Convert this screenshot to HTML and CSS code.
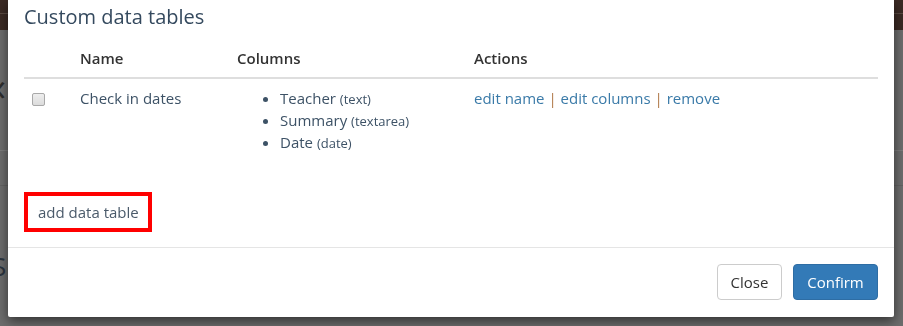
FILE: index.html
```html
<!DOCTYPE html>
<html>
<head>
    <title>Custom data tables</title>
    <link rel="stylesheet" href="styles.css">
</head>
<body>
    <div class="page">
        <div class="topbar"><div class="topbar-line"></div></div>
        <div class="page-back">&lsaquo;</div>
        <div class="page-rule"></div>
        <div class="page-rule second"></div>
        <div class="page-text">Si</div>
    </div>

    <div class="modal">
        <div class="modal-body">
            <h4 class="modal-title">Custom data tables</h4>
            <table class="tables">
                <thead>
                    <tr>
                        <th class="col-check"></th>
                        <th class="col-name">Name</th>
                        <th class="col-columns">Columns</th>
                        <th>Actions</th>
                    </tr>
                </thead>
                <tbody>
                    <tr>
                        <td><input type="checkbox" class="check"></td>
                        <td class="name">Check in dates</td>
                        <td>
                            <ul class="column-list">
                                <li>Teacher <small>(text)</small></li>
                                <li>Summary <small>(textarea)</small></li>
                                <li>Date <small>(date)</small></li>
                            </ul>
                        </td>
                        <td class="actions">
                            <a href="#">edit name</a> <span class="sep">|</span>
                            <a href="#">edit columns</a> <span class="sep">|</span>
                            <a href="#">remove</a>
                        </td>
                    </tr>
                </tbody>
            </table>
            <button class="add-table">add data table</button>
        </div>
        <div class="modal-footer">
            <button class="btn btn-default">Close</button>
            <button class="btn btn-primary">Confirm</button>
        </div>
    </div>
</body>
</html>
```

FILE: styles.css
```css
body { margin: 0; background: #6d6d6d; font-family: "Open Sans", "Liberation Sans", sans-serif; font-size: 15px; color: #34495e; height: 326px; overflow: hidden; }

/* page behind the backdrop */
.page { height: 326px; }
.topbar { height: 30px; background: #3b2a24; padding-top: 13px; box-sizing: border-box; }
.topbar-line { height: 1px; background: #5a4a42; }
.page-back { font-size: 40px; line-height: 40px; color: #2e2e2e; margin-top: 36px; margin-left: -6px; }
.page-rule { height: 1px; background: #7d7d7d; margin-top: 44px; }
.page-rule.second { margin-top: 34px; background: #626262; }
.page-text { font-size: 26px; color: #2c3540; margin-top: 62px; margin-left: -8px; }

/* modal */
.modal { position: fixed; left: 8px; top: 0; width: 886px; background: #fff; box-shadow: 0 4px 12px rgba(0, 0, 0, 0.55); border-radius: 0 0 2px 2px; }
.modal-body { padding: 6px 16px 15px; }
.modal-title { margin: 0; font-size: 20px; font-weight: normal; line-height: 22px; color: #34495e; }

.tables { width: 100%; border-collapse: collapse; margin-top: 11px; }
.tables th, .tables td { padding: 8px; line-height: 22px; text-align: left; vertical-align: top; }
.tables th { font-weight: 600; color: #333; border-bottom: 2px solid #dedede; }
.col-check { width: 32px; }
.col-name { width: 141px; }
.col-columns { width: 221px; }

.check { -webkit-appearance: none; appearance: none; width: 13px; height: 13px; margin: 6px 0 0; border: 1px solid #a9a9a9; border-radius: 2px; background: linear-gradient(#eee, #dcdcdc); display: block; }
.name { color: #3d5266; }

.column-list { margin: 0; padding-left: 43px; color: #3d5266; }
.column-list li { height: 22px; }
.column-list small { font-size: 13px; line-height: 1; }

.actions a { color: #3a7aa8; text-decoration: none; }
.sep { color: #b07a4a; }

.add-table { display: block; box-sizing: border-box; margin-top: 31px; font: inherit; font-size: 15px; color: #4a5a6a; background: #fff; border: 4px solid #f00; padding: 0 10px; height: 40px; line-height: 20px; width: 128px; text-align: left; white-space: nowrap; }

.modal-footer { border-top: 1px solid #e5e5e5; padding: 16px 16px 17px; display: flex; justify-content: flex-end; gap: 11px; }
.btn { font: inherit; font-size: 15px; height: 36px; padding: 0 12px; border-radius: 4px; border: 1px solid #ccc; background: #fff; color: #333; }
.btn-default { width: 65px; }
.btn-primary { width: 85px; background: #337ab7; border-color: #2e6da4; color: #fff; }
```
